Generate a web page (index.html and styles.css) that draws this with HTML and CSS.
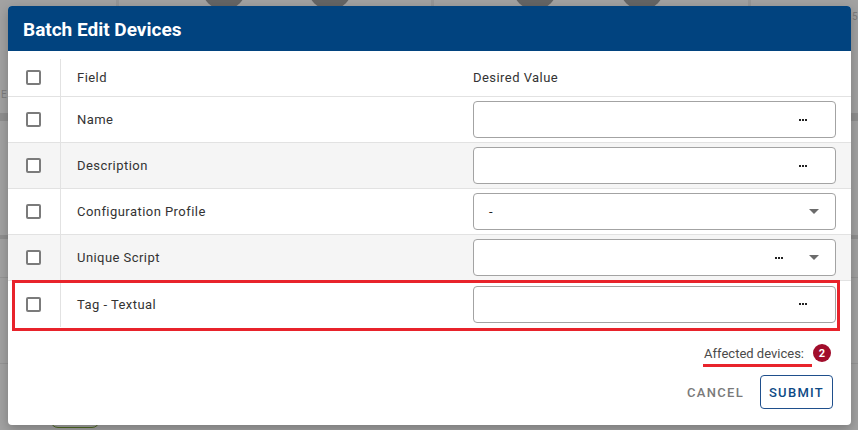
FILE: index.html
```html
<!DOCTYPE html>
<html>
<head>
<meta charset="utf-8">
<link rel="stylesheet" href="styles.css">
</head>
<body>
<div class="backdrop">
  <span class="bg-ring r1"></span>
  <span class="bg-ring r2"></span>
  <span class="bg-ring r3"></span>
  <span class="bg-ring r4"></span>
  <span class="bg-vline v1"></span>
  <span class="bg-vline v2"></span>
  <span class="bg-vline v3"></span>
  <span class="bg-char c1">E</span>
  <span class="bg-char c2">5</span>
  <span class="bg-hline h1"></span>
  <span class="bg-hline h2"></span>
  <span class="bg-hline h3"></span>
  <span class="bg-hline h4"></span>
  <span class="bg-pill"></span>
</div>

<div class="dialog">
  <div class="dialog-title">Batch Edit Devices</div>

  <div class="table">
    <div class="row head">
      <div class="cell check"><span class="checkbox"></span></div>
      <div class="cell field">Field</div>
      <div class="cell value-head">Desired Value</div>
    </div>

    <div class="row">
      <div class="cell check"><span class="checkbox"></span></div>
      <div class="cell field">Name</div>
      <div class="cell value">
        <div class="input">
          <span class="dots"><i></i><i></i><i></i></span>
        </div>
      </div>
    </div>

    <div class="row alt">
      <div class="cell check"><span class="checkbox"></span></div>
      <div class="cell field">Description</div>
      <div class="cell value">
        <div class="input">
          <span class="dots"><i></i><i></i><i></i></span>
        </div>
      </div>
    </div>

    <div class="row">
      <div class="cell check"><span class="checkbox"></span></div>
      <div class="cell field">Configuration Profile</div>
      <div class="cell value">
        <div class="input select">
          <span class="select-text">-</span>
          <span class="caret"></span>
        </div>
      </div>
    </div>

    <div class="row alt">
      <div class="cell check"><span class="checkbox"></span></div>
      <div class="cell field">Unique Script</div>
      <div class="cell value">
        <div class="input select">
          <span class="dots"><i></i><i></i><i></i></span>
          <span class="caret"></span>
        </div>
      </div>
    </div>

    <div class="row last highlighted">
      <div class="cell check"><span class="checkbox"></span></div>
      <div class="cell field">Tag - Textual</div>
      <div class="cell value">
        <div class="input">
          <span class="dots"><i></i><i></i><i></i></span>
        </div>
      </div>
    </div>
  </div>

  <div class="footer">
    <div class="affected">
      <span class="affected-label">Affected devices:</span>
      <span class="badge">2</span>
    </div>
    <div class="actions">
      <button class="btn btn-text">CANCEL</button>
      <button class="btn btn-outline">SUBMIT</button>
    </div>
  </div>
</div>
</body>
</html>
```

FILE: styles.css
```css
* { box-sizing: border-box; }

html, body {
  margin: 0;
  padding: 0;
}

body {
  width: 858px;
  height: 430px;
  overflow: hidden;
  background: #a2a2a2;
  font-family: Roboto, "Liberation Sans", sans-serif;
  position: relative;
  padding: 6px 7px 0 8px;
}

/* dimmed page behind the modal */
.backdrop {
  position: absolute;
  inset: 0;
  overflow: hidden;
}
.bg-ring {
  position: absolute;
  top: -34px;
  width: 44px;
  height: 44px;
  border-radius: 50%;
  background: #656565;
}
.r1 { left: 202px; }
.r2 { left: 308px; }
.r3 { left: 513px; }
.r4 { left: 620px; }
.bg-vline {
  position: absolute;
  top: 0;
  width: 3px;
  height: 10px;
  background: #979797;
}
.v1 { left: 116px; }
.v2 { left: 431px; }
.v3 { left: 748px; }
.bg-char {
  position: absolute;
  font-size: 10px;
  color: #7c7c7c;
}
.c1 { left: 1px; top: 89px; }
.c2 { left: 852px; top: 11px; }
.bg-hline {
  position: absolute;
  left: 0;
  width: 858px;
  height: 1px;
  background: #959595;
}
.h1 { top: 113px; height: 8px; background: #8f8f8f; }
.h2 { top: 235px; height: 4px; background: #8f8f8f; }
.h3 { top: 277px; }
.h4 { top: 363px; }
.bg-pill {
  position: absolute;
  left: 50px;
  top: 410px;
  width: 50px;
  height: 18px;
  border: 1px solid #4f6a22;
  border-radius: 8px;
}

/* dialog */
.dialog {
  position: relative;
  width: 843px;
  height: 419px;
  background: #fff;
  border-radius: 4px;
  box-shadow: 0 4px 12px rgba(0, 0, 0, 0.25);
  display: flex;
  flex-direction: column;
}

.dialog-title {
  height: 45px;
  background: #01437f;
  color: #fff;
  font-size: 19px;
  font-weight: 700;
  padding-left: 15px;
  padding-top: 1px;
  display: flex;
  align-items: center;
  border-radius: 4px 4px 0 0;
}

.table {
  display: flex;
  flex-direction: column;
}

.row {
  position: relative;
  display: grid;
  grid-template-columns: 53px 412px 1fr;
  height: 46px;
  border-bottom: 1px solid #e2e2e2;
  background: #fff;
}
.row.head { padding-top: 8px; }
.row.alt { background: #f5f5f5; }
.row.last { border-bottom: none; }

.cell {
  display: flex;
  align-items: center;
  font-size: 13px;
  color: #333;
  letter-spacing: 0.45px;
}

.cell.check {
  justify-content: center;
  border-right: 1px solid #e2e2e2;
  padding-right: 1px;
}

.checkbox {
  width: 15px;
  height: 15px;
  border: 2px solid #7b7b7b;
  border-radius: 2px;
  background: #fff;
}

.cell.field {
  padding-left: 16px;
}

.cell.value {
  padding-right: 15px;
}

.input {
  width: 100%;
  height: 37px;
  border: 1px solid #a3a3a3;
  border-radius: 4px;
  background: #fff;
  display: flex;
  align-items: center;
  justify-content: flex-end;
  padding-right: 28px;
}

.input.select {
  justify-content: space-between;
  padding-left: 15px;
  padding-right: 16px;
}
.input.select .dots {
  margin-left: auto;
  margin-right: 26px;
}

.select-text {
  font-size: 13px;
  color: #222;
}

.dots {
  display: flex;
  gap: 1px;
}
.dots i {
  width: 2px;
  height: 2px;
  background: #222;
}

.caret {
  width: 0;
  height: 0;
  border-left: 5px solid transparent;
  border-right: 5px solid transparent;
  border-top: 5px solid #6b6b6b;
}

/* annotation box over the last row */
.row.highlighted::after {
  content: "";
  position: absolute;
  left: 4px;
  right: 11px;
  top: -1px;
  bottom: -4px;
  border: 3px solid #e8232b;
  pointer-events: none;
}

.footer {
  flex: 1;
  display: flex;
  flex-direction: column;
  align-items: flex-end;
  padding: 15px 18px 16px 0;
}

.affected {
  display: flex;
  align-items: center;
  gap: 9px;
  padding-right: 2px;
  height: 22px;
}

.affected-label {
  position: relative;
  font-size: 13px;
  color: #4a4a4a;
  letter-spacing: 0;
}
.affected-label::after {
  content: "";
  position: absolute;
  left: -1px;
  right: -8px;
  bottom: -6px;
  height: 3px;
  background: #e8232b;
}

.badge {
  width: 18px;
  height: 18px;
  border-radius: 50%;
  background: #a10d2b;
  color: #fff;
  font-size: 11px;
  font-weight: 700;
  display: flex;
  align-items: center;
  justify-content: center;
}

.actions {
  margin-top: auto;
  display: flex;
  align-items: center;
  gap: 16px;
}

.btn {
  font-family: Roboto, "Liberation Sans", sans-serif;
  font-size: 13px;
  font-weight: 500;
  letter-spacing: 1.3px;
  background: none;
  border: none;
  padding: 0;
  cursor: pointer;
}

.btn-text {
  color: #7a7a7a;
}

.btn-outline {
  height: 34px;
  width: 73px;
  border: 1px solid #1f4f8c;
  border-radius: 4px;
  color: #0d4a85;
}
```
